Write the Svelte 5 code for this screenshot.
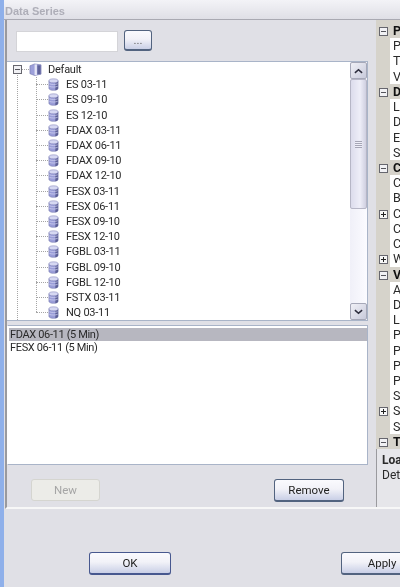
<script>
  const series = [
    'ES 03-11', 'ES 09-10', 'ES 12-10', 'FDAX 03-11', 'FDAX 06-11', 'FDAX 09-10', 'FDAX 12-10',
    'FESX 03-11', 'FESX 06-11', 'FESX 09-10', 'FESX 12-10', 'FGBL 03-11', 'FGBL 09-10',
    'FGBL 12-10', 'FSTX 03-11', 'NQ 03-11'
  ];

  const selected = ['FDAX 06-11 (5 Min)', 'FESX 06-11 (5 Min)'];

  // only the first letter of each row is visible, the window is cut off there
  const props = [
    { t: 'P', cat: true }, { t: 'P' }, { t: 'T' }, { t: 'V' },
    { t: 'D', cat: true }, { t: 'L' }, { t: 'D' }, { t: 'E' }, { t: 'S' },
    { t: 'C', cat: true }, { t: 'C' }, { t: 'B' }, { t: 'C', plus: true }, { t: 'C' }, { t: 'C' },
    { t: 'W', plus: true },
    { t: 'V', cat: true }, { t: 'A' }, { t: 'D' }, { t: 'L' }, { t: 'P' }, { t: 'P' }, { t: 'P' }, { t: 'P' },
    { t: 'S' }, { t: 'S', plus: true }, { t: 'S' },
    { t: 'T', cat: true }
  ];
</script>

{#snippet cylinder()}
  <svg class="db" viewBox="0 0 12 14" width="11" height="13" aria-hidden="true">
    <path d="M1 3v8c0 1.4 2.2 2.4 5 2.4s5-1 5-2.4V3z" fill="#9a9dd8" stroke="#7477ad" stroke-width=".6" />
    <path d="M8 3.5h3V11c0 1-1 1.8-3 2.2z" fill="#5d6096" />
    <path d="M1.5 6.2c2 1 7 1 9 0M1.5 9c2 1 7 1 9 0" fill="none" stroke="#d0d2f0" stroke-width=".8" />
    <ellipse cx="6" cy="3" rx="5" ry="2.2" fill="#d6d8f2" stroke="#8083b8" stroke-width=".6" />
  </svg>
{/snippet}

{#snippet box(plus)}
  <span class="box" class:plus></span>
{/snippet}

<div class="window">
  <div class="title">Data Series</div>
  <div class="main">
    <div class="panel">
      <div class="picker">
        <div class="input"></div>
        <button type="button" class="btn dots">...</button>
      </div>

      <div class="tree">
        <div class="nodes">
          <div class="root">
            {@render box(false)}
            <span class="dash short"></span>
            <svg class="srv" viewBox="0 0 14 14" width="13" height="13" aria-hidden="true">
              <path d="M1 3l5-2 7 1v10l-7 1.5-5-2z" fill="#9da0da" stroke="#6f72a8" stroke-width=".6" />
              <path d="M6 1.5h2.5v11.5H6z" fill="#e4e5f6" />
              <path d="M9 2.5h3.5v9.5H9z" fill="#5f6298" />
            </svg>
            <span>Default</span>
          </div>
          {#each series as name}
            <div class="node">
              <span class="dash"></span>
              {@render cylinder()}
              <span>{name}</span>
            </div>
          {/each}
        </div>
        <div class="scroll">
          <div class="arrow"><svg viewBox="0 0 10 6" width="9" height="6" aria-hidden="true"><path d="M1 5l4-3.5L9 5" fill="none" stroke="#2c2c3c" stroke-width="1.7" /></svg></div>
          <div class="thumb"><span class="grip"></span></div>
          <div class="track"></div>
          <div class="arrow"><svg viewBox="0 0 10 6" width="9" height="6" aria-hidden="true"><path d="M1 1l4 3.5L9 1" fill="none" stroke="#2c2c3c" stroke-width="1.7" /></svg></div>
        </div>
      </div>

      <div class="list">
        {#each selected as item, i}
          <div class="item" class:on={i === 0}>{item}</div>
        {/each}
      </div>

      <div class="actions">
        <button type="button" class="btn new" disabled>New</button>
        <button type="button" class="btn remove">Remove</button>
      </div>
    </div>

    <div class="side">
      <div class="grid">
        {#each props as p}
          <div class="row" class:cat={p.cat}>
            <span class="gutter">
              {#if p.cat || p.plus}{@render box(p.plus)}{/if}
            </span>
            <span class="val">{p.t}</span>
          </div>
        {/each}
      </div>
      <div class="help">
        <b>Loa</b>
        <span>Dete</span>
      </div>
    </div>
  </div>

  <div class="footer">
    <button type="button" class="btn ok">OK</button>
    <button type="button" class="btn apply">Apply</button>
  </div>
</div>

<style>
  :global(body) {
    margin: 0;
    overflow: hidden;
    background: #e0e0e6;
  }

  .window {
    width: 400px;
    height: 587px;
    box-sizing: border-box;
    display: flex;
    flex-direction: column;
    overflow: hidden;
    background: #e0e0e6;
    border-left: 4px solid #8fb0ea;
    font-family: Roboto, "Liberation Sans", Arial, sans-serif;
    font-size: 11px;
    color: #2a2a2a;
    filter: blur(0.35px);
  }

  .title {
    height: 20px;
    box-sizing: border-box;
    margin-left: -4px;
    padding: 5px 0 0 5px;
    background: linear-gradient(#f3f3f7, #dfdfe6);
    border-bottom: 1px solid #a9a9b2;
    font-family: "Liberation Sans", sans-serif;
    font-weight: bold;
    font-size: 11px;
    line-height: 12px;
    color: #aeaeb8;
    position: relative;
  }

  .main {
    height: 489px;
    display: flex;
    flex-shrink: 0;
    gap: 8px;
    border-bottom: 2px solid #f7f7f7;
    box-sizing: border-box;
    border-left: 2px solid #9a9a9e;
    margin-left: 1px;
  }

  .panel {
    width: 361px;
    flex-shrink: 0;
    display: flex;
    flex-direction: column;
  }

  .picker {
    height: 41px;
    box-sizing: border-box;
    padding: 11px 0 0 9px;
    display: flex;
    gap: 6px;
  }

  .input {
    width: 100px;
    height: 19px;
    background: #fff;
    border: 1px solid #d4d4d8;
  }

  .btn {
    box-sizing: border-box;
    padding: 0;
    border: 1px solid #52637f;
    border-bottom-width: 2px;
    border-radius: 3px;
    background: linear-gradient(#fafafe, #f2f2f8 45%, #c9cfe6);
    font: inherit;
    font-size: 11.5px;
    color: #222;
  }

  .dots {
    width: 28px;
    height: 21px;
    margin-top: -1px;
    color: #666;
  }

  .tree {
    height: 260px;
    display: flex;
    background: #fff;
    border-top: 1px solid #a9b4c8;
    border-bottom: 1px solid #a9b4c8;
    border-right: 1px solid #a9b4c8;
    box-sizing: border-box;
    letter-spacing: -0.25px;
  }

  /* the two dotted guides of the tree */
  .nodes {
    flex: 1;
    overflow: hidden;
    background:
      repeating-linear-gradient(#a5a5a5 0 1px, transparent 1px 2px) 10px 13px / 1px 100% no-repeat,
      repeating-linear-gradient(#a5a5a5 0 1px, transparent 1px 2px) 29px 15px / 1px 236px no-repeat;
  }

  .root, .node {
    height: 15.2px;
    display: flex;
    align-items: center;
    white-space: nowrap;
  }

  .root {
    padding-left: 6px;
  }

  .srv {
    margin-right: 6px;
  }

  .node {
    padding-left: 29px;
  }

  .dash {
    width: 12px;
    height: 0;
    flex-shrink: 0;
    border-top: 1px dotted #a5a5a5;
  }

  .dash.short {
    width: 7px;
  }

  .db {
    margin-right: 7px;
  }

  .box {
    width: 9px;
    height: 9px;
    box-sizing: border-box;
    display: inline-block;
    flex-shrink: 0;
    border: 1px solid #66666e;
    background: linear-gradient(#55555c, #55555c) center / 5px 1px no-repeat, #f1f1f4;
  }

  .box.plus {
    background:
      linear-gradient(#222, #222) center / 5px 1px no-repeat,
      linear-gradient(#222, #222) center / 1px 5px no-repeat,
      #f6f6f6;
  }

  .scroll {
    width: 17px;
    flex-shrink: 0;
    display: flex;
    flex-direction: column;
    background: linear-gradient(90deg, #f0f0f8, #fbfbff);
  }

  .arrow {
    height: 17px;
    flex-shrink: 0;
    box-sizing: border-box;
    display: flex;
    align-items: center;
    justify-content: center;
    background: linear-gradient(135deg, #f0f0f6, #c8cadb);
    border: 1px solid #a6a8b8;
    border-radius: 2px;
  }

  .thumb {
    height: 130px;
    flex-shrink: 0;
    box-sizing: border-box;
    display: flex;
    align-items: center;
    justify-content: center;
    background: linear-gradient(90deg, #dcdcec, #eeeef8 60%, #cfcfe0);
    border: 1px solid #b6b6c6;
    border-radius: 2px;
  }

  .grip {
    width: 7px;
    height: 7px;
    background: repeating-linear-gradient(#a5a5b5 0 1px, #eeeef8 1px 2px);
  }

  .track {
    flex: 1;
  }

  .list {
    height: 140px;
    margin: 4px 0 0 0;
    padding: 2px 0 0 1px;
    box-sizing: border-box;
    background: #fff;
    border: 1px solid #a9b4c8;
    border-left: 1px solid #fff;
    letter-spacing: -0.35px;
  }

  .item {
    height: 13px;
    line-height: 13px;
    padding-left: 1px;
  }

  .item.on {
    background: #b7b7c0;
  }

  .actions {
    flex: 1;
    padding: 14px 24px 0 24px;
    display: flex;
    justify-content: space-between;
    align-items: flex-start;
  }

  .new {
    width: 69px;
    height: 22px;
    border: 1px solid #d5d5d0;
    background: #ecece8;
    color: #a5a5a5;
  }

  .remove {
    width: 70px;
    height: 23px;
  }

  .side {
    flex: 1;
    min-width: 0;
    display: flex;
    flex-direction: column;
    overflow: hidden;
  }

  .grid {
    height: 429px;
    padding-top: 3px;
    flex-shrink: 0;
    box-sizing: border-box;
    background: #d6d3cb;
    border-bottom: 1px solid #9a9a9e;
  }

  .row {
    height: 15.22px;
    display: flex;
    white-space: nowrap;
  }

  .gutter {
    width: 14px;
    padding: 3px 0 0 3px;
    flex-shrink: 0;
    box-sizing: border-box;
    background: #d6d3cb;
  }

  .val {
    flex: 1;
    padding-left: 3px;
    line-height: 15px;
    background: #fff;
    font-size: 12.5px;
  }

  .row.cat .val {
    background: #d6d3cb;
    font-weight: bold;
    color: #111;
  }

  .help {
    flex: 1;
    padding: 4px 0 0 5px;
    background: #e6e6ea;
    border-left: 1px solid #9a9a9e;
    display: flex;
    flex-direction: column;
    font-size: 12px;
    line-height: 15px;
  }

  .footer {
    flex: 1;
    padding: 43px 0 0 85px;
    display: flex;
    gap: 170px;
    align-items: flex-start;
  }

  .ok, .apply {
    flex-shrink: 0;
    width: 82px;
    height: 23px;
    border-color: #47588f;
  }

  .apply {
    border-color: #52637f;
  }
</style>
